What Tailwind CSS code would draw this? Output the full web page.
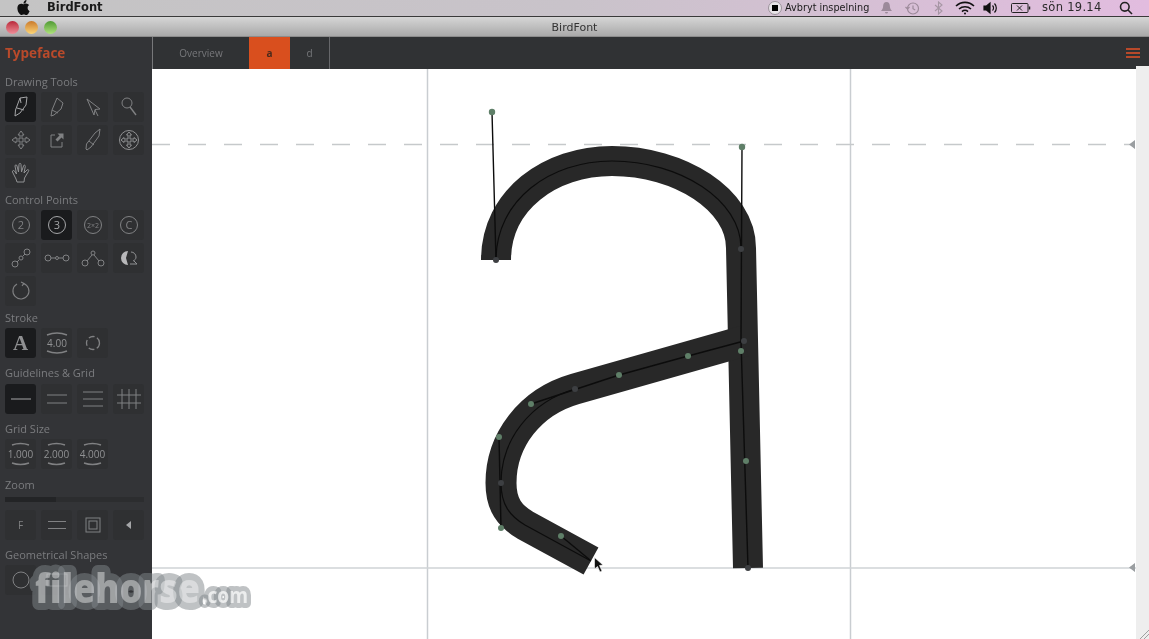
<!DOCTYPE html>
<html lang="en">
<head>
    <meta charset="UTF-8">
    <meta name="viewport" content="width=device-width, initial-scale=1.0">
    <title>BirdFont</title>
    <script src="https://cdn.jsdelivr.net/npm/@tailwindcss/browser@4"></script>
</head>
<body class="bg-white">
<div class="relative w-[1149px] h-[639px] overflow-hidden flex flex-col font-['Open_Sans',sans-serif] blur-[0.4px]">

    <!-- mac menu bar -->
    <div class="h-[17px] shrink-0 flex items-center bg-gradient-to-r from-[#c4c4c4] via-[#c9c3ca] to-[#e2bcdf] border-b border-[#3a3a3a] text-[#1a1a1a] font-['DejaVu_Sans',sans-serif]">
        <svg class="ml-[16px] w-[15px] h-[15px] -mt-[2px]" viewBox="0 0 24 24" fill="#111"><path d="M12.152 6.896c-.948 0-2.415-1.078-3.96-1.04-2.04.027-3.91 1.183-4.961 3.014-2.117 3.675-.546 9.103 1.519 12.09 1.013 1.454 2.208 3.09 3.792 3.039 1.52-.065 2.09-.987 3.935-.987 1.831 0 2.35.987 3.96.948 1.637-.026 2.676-1.48 3.676-2.948 1.156-1.688 1.636-3.325 1.662-3.415-.039-.013-3.182-1.221-3.22-4.857-.026-3.04 2.48-4.494 2.597-4.559-1.429-2.09-3.623-2.324-4.39-2.376-2-.156-3.675 1.09-4.61 1.09zM15.53 3.83c.843-1.012 1.4-2.427 1.245-3.83-1.207.052-2.662.805-3.532 1.818-.78.896-1.454 2.338-1.273 3.714 1.338.104 2.715-.688 3.559-1.701"/></svg>
        <span class="ml-[16px] text-[11.5px] font-bold leading-none">BirdFont</span>
        <div class="ml-auto mr-[16px] flex items-center h-full">
            <div class="w-[14px] h-[14px] rounded-full bg-[#e8e4e8] border border-[#9a929a] flex items-center justify-center"><div class="w-[6px] h-[6px] bg-black"></div></div>
            <span class="ml-[3px] w-[84px] text-[9.7px] leading-none whitespace-nowrap">Avbryt inspelning</span>
            <svg class="ml-[11px] w-[13px] h-[14px]" viewBox="0 0 13 14" fill="#9c8a9a"><path d="M6.500 1c2.400 0 3.400 2 3.400 4.400 0 2 1 3.200 2.100 4.600H1c1.100-1.400 2.100-2.600 2.100-4.600C3.100 3 4.100 1 6.500 1zM5 11h3a1.500 1.500 0 0 1-3 0z"/></svg>
            <svg class="ml-[12px] w-[15px] h-[15px]" viewBox="0 0 15 15" fill="none" stroke="#9c8a9a" stroke-width="1.200"><circle cx="8" cy="7.500" r="5.500"/><path d="M8 4.500v3.200l2.200 1.300M0.500 6l2 2 2-2"/></svg>
            <svg class="ml-[14px] w-[9px] h-[14px]" viewBox="0 0 9 14" fill="none" stroke="#a696a4" stroke-width="1.100"><path d="M1 4l7 6-3.500 3V1L8 4l-7 6"/></svg>
            <svg class="ml-[12px] w-[20px] h-[14px]" viewBox="0 0 20 14" fill="none" stroke="#111" stroke-width="1.600"><path d="M1 5a13 13 0 0 1 18 0M4 8a9 9 0 0 1 12 0M7 10.600a4.400 4.400 0 0 1 6 0"/><circle cx="10" cy="12.600" r="1" fill="#111" stroke="none"/></svg>
            <svg class="ml-[8px] w-[16px] h-[14px]" viewBox="0 0 16 14" fill="none" stroke="#111" stroke-width="1.200"><path d="M1 5h2.500L7 2v10L3.500 9H1z" fill="#111"/><path d="M9.500 4.500a3.500 3.500 0 0 1 0 5M11.500 2.500a6.500 6.500 0 0 1 0 9"/></svg>
            <svg class="ml-[12px] w-[20px] h-[12px]" viewBox="0 0 20 12" fill="none" stroke="#222" stroke-width="1"><rect x="0.500" y="1.500" width="16.500" height="9" rx="1"/><path d="M6 3.500l5 5M11 3.500l-5 5"/><path d="M18.500 4.500v3" stroke-width="1.500"/></svg>
            <span class="ml-[11px] w-[61px] text-[11.5px] leading-none tracking-[0.3px] whitespace-nowrap text-[#2a2a2a]">sön 19.14</span>
            <svg class="ml-[16px] w-[14px] h-[14px]" viewBox="0 0 14 14" fill="none" stroke="#222" stroke-width="1.600"><circle cx="5.800" cy="5.800" r="4.300"/><path d="M9 9l4 4"/></svg>
        </div>
    </div>

    <!-- window title bar -->
    <div class="relative h-[20px] shrink-0 flex items-center justify-center pt-[2px] bg-gradient-to-b from-[#d6d6d6] to-[#a9a9a9] border-b border-[#8c8c8c]">
        <div class="absolute left-[6px] top-[4px] flex gap-[6px]">
            <div class="w-[13px] h-[13px] rounded-full bg-gradient-to-b from-[#b8233a] to-[#ee8d9a]"></div>
            <div class="w-[13px] h-[13px] rounded-full bg-gradient-to-b from-[#c97a2a] to-[#fbd576]"></div>
            <div class="w-[13px] h-[13px] rounded-full bg-gradient-to-b from-[#4f9a34] to-[#aee27c]"></div>
        </div>
        <span class="text-[11px] text-[#333] font-['DejaVu_Sans',sans-serif] leading-none">BirdFont</span>
    </div>

    <div class="flex flex-1 min-h-0">
        <!-- tool sidebar -->
        <aside class="w-[152px] shrink-0 bg-[#333437] px-[5px] text-[#7b7c7f] text-[11px] leading-[14px]">
            <div class="h-[32px] flex items-center text-[13.5px] font-bold text-[#b94a2b]">Typeface</div>

            <div class="mt-[6px] mb-[3px] h-[14px]">Drawing Tools</div>
            <div class="grid grid-cols-[repeat(4,31px)] gap-x-[5px] gap-y-[3px]">
                <div class="h-[30px] rounded-[3px] bg-[#1a1b1d] flex items-center justify-center"><svg class="w-[20px] h-[22px]" viewBox="0 0 20 22" fill="none" stroke="#a5a6a8" stroke-width="1"><path d="M9 2l7-1-1 8-6 8-5 3 .5-6z"/><path d="M6 12l7 2M9 2l1 5"/></svg></div>
                <div class="h-[30px] rounded-[3px] bg-[#2f3032] flex items-center justify-center"><svg class="w-[20px] h-[22px]" viewBox="0 0 20 22" fill="none" stroke="#808183" stroke-width="1"><path d="M10 2l6 5-2 6-7 6-3 1 1-6z"/><path d="M5 14l6 3"/></svg></div>
                <div class="h-[30px] rounded-[3px] bg-[#2f3032] flex items-center justify-center"><svg class="w-[20px] h-[22px]" viewBox="0 0 20 22" fill="none" stroke="#808183" stroke-width="1"><path d="M4 3l13 10-5 .5L11 19z"/><path d="M12 14l3 6"/></svg></div>
                <div class="h-[30px] rounded-[3px] bg-[#2f3032] flex items-center justify-center"><svg class="w-[20px] h-[22px]" viewBox="0 0 20 22" fill="none" stroke="#808183" stroke-width="1"><circle cx="8" cy="7" r="5"/><path d="M11 11l6 8" stroke-width="1.400"/></svg></div>

                <div class="h-[30px] rounded-[3px] bg-[#2f3032] flex items-center justify-center"><svg class="w-[20px] h-[20px]" viewBox="0 0 20 20" fill="none" stroke="#808183" stroke-width="1"><path d="M10 1l3 4h-2v4h4V7l4 3-4 3v-2h-4v4h2l-3 4-3-4h2v-4H5v2l-4-3 4-3v2h4V5H7z"/></svg></div>
                <div class="h-[30px] rounded-[3px] bg-[#2f3032] flex items-center justify-center"><svg class="w-[18px] h-[18px]" viewBox="0 0 18 18" fill="none" stroke="#808183" stroke-width="1"><path d="M7 4H3v12h11v-5"/><path d="M9.500 2.500h6v6l-2-2-4 4-2-2 4-4z" fill="#808183" stroke="none"/></svg></div>
                <div class="h-[30px] rounded-[3px] bg-[#2f3032] flex items-center justify-center"><svg class="w-[20px] h-[24px]" viewBox="0 0 20 24" fill="none" stroke="#808183" stroke-width="1"><path d="M17 1l-1 7-8 11-4 3-1-1 .5-5L12 5z"/><path d="M6 13l5 4"/></svg></div>
                <div class="h-[30px] rounded-[3px] bg-[#2f3032] flex items-center justify-center"><svg class="w-[22px] h-[22px]" viewBox="0 0 22 22" fill="none" stroke="#909193" stroke-width="1"><circle cx="11" cy="11" r="9.500"/><path d="M11 3l2.500 3h-1.500v4h4V8.500l3 2.500-3 2.500V12h-4v4h1.500L11 19l-2.500-3H10v-4H6v1.500L3 11l3-2.500V10h4V6H8.500z"/></svg></div>

                <div class="h-[30px] rounded-[3px] bg-[#2f3032] flex items-center justify-center"><svg class="w-[20px] h-[22px]" viewBox="0 0 20 22" fill="none" stroke="#909193" stroke-width="1"><path d="M5 17L1.500 10c-.5-1.500 1-2 2-1l2 3L4 4c0-1.500 1.800-1.500 2 0l1.500 6L8 2.500c0-1.500 2-1.500 2 0l.5 7.500L12.500 4c.3-1.500 2-1 1.800.5L13 11l3-3c1-1 2.300 0 1.500 1.300L13.500 16l-.5 4H6z"/></svg></div>
            </div>

            <div class="mt-[5px] mb-[3px] h-[14px]">Control Points</div>
            <div class="grid grid-cols-[repeat(4,31px)] gap-x-[5px] gap-y-[3px]">
                <div class="h-[30px] rounded-[3px] bg-[#2f3032] flex items-center justify-center"><svg class="w-[20px] h-[20px]" viewBox="0 0 20 20" fill="none" stroke="#808183"><circle cx="10" cy="10" r="8.500"/><text x="10" y="14" text-anchor="middle" font-size="11" font-family="Open Sans" fill="#808183" stroke="none">2</text></svg></div>
                <div class="h-[30px] rounded-[3px] bg-[#1a1b1d] flex items-center justify-center"><svg class="w-[20px] h-[20px]" viewBox="0 0 20 20" fill="none" stroke="#a5a6a8"><circle cx="10" cy="10" r="8.500"/><text x="10" y="14" text-anchor="middle" font-size="11" font-family="Open Sans" fill="#a5a6a8" stroke="none">3</text></svg></div>
                <div class="h-[30px] rounded-[3px] bg-[#2f3032] flex items-center justify-center"><svg class="w-[20px] h-[20px]" viewBox="0 0 20 20" fill="none" stroke="#808183"><circle cx="10" cy="10" r="8.500"/><text x="10" y="12.500" text-anchor="middle" font-size="7" font-family="Open Sans" fill="#808183" stroke="none">2×2</text></svg></div>
                <div class="h-[30px] rounded-[3px] bg-[#2f3032] flex items-center justify-center"><svg class="w-[20px] h-[20px]" viewBox="0 0 20 20" fill="none" stroke="#808183"><circle cx="10" cy="10" r="8.500"/><text x="10" y="14" text-anchor="middle" font-size="11" font-family="Open Sans" fill="#808183" stroke="none">C</text></svg></div>

                <div class="h-[30px] rounded-[3px] bg-[#2f3032] flex items-center justify-center"><svg class="w-[20px] h-[20px]" viewBox="0 0 20 20" fill="none" stroke="#808183"><circle cx="4" cy="16" r="3"/><circle cx="10" cy="10" r="2"/><circle cx="16" cy="4" r="3"/><path d="M6 14l2-2M12 8l2-2"/></svg></div>
                <div class="h-[30px] rounded-[3px] bg-[#2f3032] flex items-center justify-center"><svg class="w-[26px] h-[10px]" viewBox="0 0 26 10" fill="none" stroke="#808183"><circle cx="4" cy="5" r="3"/><circle cx="13" cy="5" r="1.500"/><circle cx="22" cy="5" r="3"/><path d="M7 5h4.500M14.500 5H19"/></svg></div>
                <div class="h-[30px] rounded-[3px] bg-[#2f3032] flex items-center justify-center"><svg class="w-[24px] h-[18px]" viewBox="0 0 24 18" fill="none" stroke="#808183"><circle cx="4" cy="14" r="3"/><circle cx="12" cy="4" r="2"/><circle cx="20" cy="14" r="3"/><path d="M6 12l5-6M13 6l5 6"/></svg></div>
                <div class="h-[30px] rounded-[3px] bg-[#2f3032] flex items-center justify-center"><svg class="w-[20px] h-[18px]" viewBox="0 0 20 18" fill="none" stroke="#909193"><path d="M9 2a7 7 0 0 0 0 14l-2-7z" fill="#b8b8ba" stroke="none"/><path d="M12 3a5 5 0 0 1 5 5c0 2-1 3-3 4M11 15h7l-3-3"/></svg></div>

                <div class="h-[30px] rounded-[3px] bg-[#2f3032] flex items-center justify-center"><svg class="w-[20px] h-[20px]" viewBox="0 0 20 20" fill="none" stroke="#808183" stroke-width="1.100"><path d="M12.500 2.400A8 8 0 1 1 6 3"/><path d="M10 1l3 1.400-2 2.400"/></svg></div>
            </div>

            <div class="mt-[5px] mb-[3px] h-[14px]">Stroke</div>
            <div class="grid grid-cols-[repeat(4,31px)] gap-x-[5px]">
                <div class="h-[30px] rounded-[3px] bg-[#1a1b1d] flex items-center justify-center font-['Liberation_Serif',serif] font-bold text-[21px] text-[#8f9092]">A</div>
                <div class="h-[30px] rounded-[3px] bg-[#2f3032] flex items-center justify-center"><svg class="w-[26px] h-[24px]" viewBox="0 0 26 24" fill="none" stroke="#808183" stroke-width="1.400"><path d="M3 4q10-4 20 0M3 20q10 4 20 0"/><text x="13" y="16" text-anchor="middle" font-size="10" font-family="Open Sans" fill="#909193" stroke="none">4.00</text></svg></div>
                <div class="h-[30px] rounded-[3px] bg-[#2f3032] flex items-center justify-center"><svg class="w-[16px] h-[16px]" viewBox="0 0 16 16" fill="none" stroke="#808183" stroke-width="1.300"><circle cx="8" cy="8" r="6.500" stroke-dasharray="6 2.500"/></svg></div>
            </div>

            <div class="mt-[8px] mb-[4px] h-[14px]">Guidelines &amp; Grid</div>
            <div class="grid grid-cols-[repeat(4,31px)] gap-x-[5px]">
                <div class="h-[30px] rounded-[3px] bg-[#1a1b1d] flex items-center justify-center"><svg class="w-[20px] h-[4px]" viewBox="0 0 20 4" fill="none" stroke="#a5a6a8"><path d="M0 2h20"/></svg></div>
                <div class="h-[30px] rounded-[3px] bg-[#2f3032] flex items-center justify-center"><svg class="w-[20px] h-[14px]" viewBox="0 0 20 14" fill="none" stroke="#808183"><path d="M0 3h20M0 11h20"/></svg></div>
                <div class="h-[30px] rounded-[3px] bg-[#2f3032] flex items-center justify-center"><svg class="w-[20px] h-[18px]" viewBox="0 0 20 18" fill="none" stroke="#808183"><path d="M0 2h20M0 9h20M0 16h20"/></svg></div>
                <div class="h-[30px] rounded-[3px] bg-[#2f3032] flex items-center justify-center"><svg class="w-[24px] h-[22px]" viewBox="0 0 24 22" fill="none" stroke="#808183"><path d="M0 7h24M0 15h24M5 1v20M12 1v20M19 1v20"/></svg></div>
            </div>

            <div class="mt-[8px] mb-[3px] h-[14px]">Grid Size</div>
            <div class="grid grid-cols-[repeat(4,31px)] gap-x-[5px]">
                <div class="h-[30px] rounded-[3px] bg-[#2f3032] flex items-center justify-center"><svg class="w-[29px] h-[24px]" viewBox="0 0 29 24" fill="none" stroke="#808183" stroke-width="1.400"><path d="M6 3q8.500-3 17 0M6 21q8.500 3 17 0"/><text x="14.500" y="16" text-anchor="middle" font-size="10" font-family="Open Sans" fill="#909193" stroke="none">1.000</text></svg></div>
                <div class="h-[30px] rounded-[3px] bg-[#2f3032] flex items-center justify-center"><svg class="w-[29px] h-[24px]" viewBox="0 0 29 24" fill="none" stroke="#808183" stroke-width="1.400"><path d="M6 3q8.500-3 17 0M6 21q8.500 3 17 0"/><text x="14.500" y="16" text-anchor="middle" font-size="10" font-family="Open Sans" fill="#909193" stroke="none">2.000</text></svg></div>
                <div class="h-[30px] rounded-[3px] bg-[#2f3032] flex items-center justify-center"><svg class="w-[29px] h-[24px]" viewBox="0 0 29 24" fill="none" stroke="#808183" stroke-width="1.400"><path d="M6 3q8.500-3 17 0M6 21q8.500 3 17 0"/><text x="14.500" y="16" text-anchor="middle" font-size="10" font-family="Open Sans" fill="#909193" stroke="none">4.000</text></svg></div>
            </div>

            <div class="mt-[9px] h-[14px]">Zoom</div>
            <div class="mt-[5px] h-[5px] w-[139px] bg-[#2c2d2f]"><div class="h-full w-[51px] bg-[#232426]"></div></div>
            <div class="mt-[8px] grid grid-cols-[repeat(4,31px)] gap-x-[5px]">
                <div class="h-[30px] rounded-[3px] bg-[#2f3032] flex items-center justify-center text-[10px] text-[#808183]">F</div>
                <div class="h-[30px] rounded-[3px] bg-[#2f3032] flex items-center justify-center"><svg class="w-[18px] h-[10px]" viewBox="0 0 18 10" fill="none" stroke="#808183"><path d="M0 1.500h18M0 8.500h18"/></svg></div>
                <div class="h-[30px] rounded-[3px] bg-[#2f3032] flex items-center justify-center"><svg class="w-[16px] h-[16px]" viewBox="0 0 16 16" fill="none" stroke="#808183"><rect x="1" y="1" width="14" height="14"/><rect x="4" y="4" width="8" height="8"/></svg></div>
                <div class="h-[30px] rounded-[3px] bg-[#2f3032] flex items-center justify-center"><svg class="w-[5px] h-[8px]" viewBox="0 0 5 8" fill="#a5a6a8"><path d="M5 0v8L0 4z"/></svg></div>
            </div>

            <div class="mt-[8px] mb-[3px] h-[14px]">Geometrical Shapes</div>
            <div class="grid grid-cols-[repeat(4,31px)] gap-x-[5px]">
                <div class="h-[30px] rounded-[3px] bg-[#2f3032] flex items-center justify-center"><svg class="w-[18px] h-[18px]" viewBox="0 0 18 18" fill="none" stroke="#808183"><circle cx="9" cy="9" r="8"/></svg></div>
                <div class="h-[30px] rounded-[3px] bg-[#2f3032] flex items-center justify-center"><svg class="w-[22px] h-[14px]" viewBox="0 0 22 14" fill="none" stroke="#808183"><rect x="1" y="1" width="20" height="12"/></svg></div>
            </div>
        </aside>

        <div class="flex-1 min-w-0 flex flex-col">
            <!-- tab bar -->
            <div class="h-[32px] shrink-0 flex items-stretch bg-[#303234] border-l border-[#77787a] text-[10px] text-[#77787b]">
                <div class="w-[96px] flex items-center justify-center">Overview</div>
                <div class="w-[41px] flex items-center justify-center bg-[#d94f1e] text-[#4a2a1c] font-bold">a</div>
                <div class="w-[40px] flex items-center justify-center border-r border-[#66676a]">d</div>
                <div class="ml-auto mr-[9px] flex flex-col justify-center gap-[2px]">
                    <div class="w-[14px] h-[2px] bg-[#b8492a]"></div>
                    <div class="w-[14px] h-[2px] bg-[#b8492a]"></div>
                    <div class="w-[14px] h-[2px] bg-[#b8492a]"></div>
                </div>
            </div>

            <!-- glyph canvas -->
            <div class="relative flex-1 bg-white">
                <svg class="absolute inset-0 w-[997px] h-[570px]" viewBox="152 69 997 570" fill="none">
                    <path d="M427.500 69V639M850.500 69V639" stroke="#c9cdd1" stroke-width="1.500"/>
                    <path d="M152 568H1136" stroke="#cfd3d6" stroke-width="1.500"/>
                    <path d="M152 144.500H1130" stroke="#c6c9cb" stroke-width="1.500" stroke-dasharray="18 18"/>
                    <path d="M1135 140v9l-6-4.500zM1135 563v9l-6-4.500z" fill="#9a9ea1"/>

                    <path d="M496 260C496 200 550 161 612 161C680 161 741 200 741 248L748 568" stroke="#282828" stroke-width="30"/>
                    <path d="M744 341L575 389C530 402 501 440 501 483C501 505 510 516 525 525L591 561" stroke="#282828" stroke-width="31"/>

                    <path d="M496 260C496 200 550 161 612 161C680 161 741 200 741 248" stroke="#0c0c0c" stroke-width="1.200"/>
                    <path d="M575 389C530 402 501 440 501 483C501 505 510 516 525 525L591 561" stroke="#0c0c0c" stroke-width="1.200"/>
                    <path d="M492 112L496 260M742 147L741 341M741 341L748 568M531 404L619 375L688 356L744 341M499 437L501 528M561 536L590 560" stroke="#0c0c0c" stroke-width="1.400"/>

                    <g fill="#5f7f68">
                        <circle cx="492" cy="112" r="3.200"/><circle cx="742" cy="147" r="3.200"/>
                        <circle cx="531" cy="404" r="3"/><circle cx="619" cy="375" r="3"/>
                        <circle cx="688" cy="356" r="3"/><circle cx="741" cy="351" r="3"/>
                        <circle cx="746" cy="461" r="3"/><circle cx="499" cy="437" r="3"/>
                        <circle cx="501" cy="528" r="3"/><circle cx="561" cy="536" r="3"/>
                    </g>
                    <g fill="#3d3f42">
                        <circle cx="496" cy="260" r="3"/><circle cx="741" cy="249" r="3"/>
                        <circle cx="744" cy="341" r="3"/><circle cx="575" cy="389" r="3"/>
                        <circle cx="501" cy="483" r="3"/><circle cx="748" cy="568" r="3"/>
                    </g>
                    <path d="M594.500 557.500V569L597.500 566.500L600 572L602 571L599.500 565.500L603 565Z" fill="#111" stroke="#fff" stroke-width=".6"/>
                </svg>
                <!-- scrollbar strip -->
                <div class="absolute right-0 -top-[3px] bottom-0 w-[13px] bg-[#eeeeee]"></div>
                <svg class="absolute right-0 bottom-0 w-[10px] h-[10px]" viewBox="0 0 10 10" stroke="#a0a0a0"><path d="M1 10L10 1M5 10L10 5"/></svg>
            </div>
        </div>
    </div>

    <!-- watermark over the window -->
    <svg class="absolute left-[25px] top-[564px] w-[235px] h-[50px]" viewBox="0 564 235 50">
        <text x="10" y="603" font-family="Open Sans" font-weight="800" font-size="41" textLength="165" lengthAdjust="spacingAndGlyphs" fill="#ffffff" fill-opacity=".42" stroke="#7f858a" stroke-opacity=".5" stroke-width="14" stroke-linejoin="round" paint-order="stroke">filehorse</text>
        <text x="177" y="603" font-family="Open Sans" font-weight="700" font-size="22" textLength="46" lengthAdjust="spacingAndGlyphs" fill="#ffffff" fill-opacity=".7" stroke="#7f858a" stroke-opacity=".5" stroke-width="10" stroke-linejoin="round" paint-order="stroke">.com</text>
    </svg>
</div>
</body>
</html>
